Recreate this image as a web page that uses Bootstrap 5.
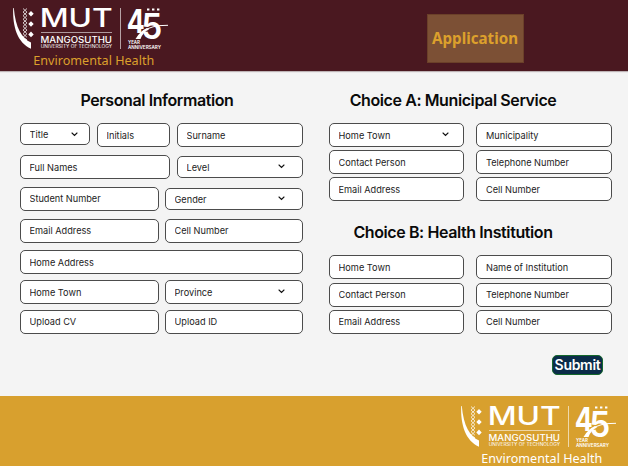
<!DOCTYPE html>
<html lang="en">
<head>
<meta charset="utf-8">
<meta name="viewport" content="width=device-width, initial-scale=1">
<title>Application</title>
<link href="https://cdn.jsdelivr.net/npm/bootstrap@5.3.0/dist/css/bootstrap.min.css" rel="stylesheet">
<style>
body{background:#f4f4f4;font-family:Inter,sans-serif;height:466px;overflow:hidden}
.top-bar{height:71px;background:#4a1820;color:#dca02c;box-shadow:0 1px 1px #bdb3b5}
.bottom-bar{height:70px;background:#d8a02e;color:#fff}
.brand-logo{width:172px;height:71px;flex:none}
.bottom-bar .brand-logo{margin-left:448px;margin-top:1.500px}
.app-btn,.app-btn:hover{width:97px;height:49px;margin:14px 0 0 255px;padding:0;border:1px solid #6b4029;border-radius:0;background:#7c5035;color:#dca02c}
.app-btn svg{display:block;width:95px;height:47px}
.form-area{height:325px;padding-left:20px}
.left-col{width:283px;margin-right:26px}
.right-col{width:283px}
h2{font-size:16px;font-weight:600;letter-spacing:-.4px;line-height:20px;color:#0a0a0a;white-space:nowrap;margin:19px 0 13px;text-align:center}
.field.form-control,.field.form-select{height:24px;min-height:0;padding:0 8.500px;border:1px solid #4c4c4c;border-radius:5px;background-color:#fff;color:#1c1c1c;font-size:9.200px;line-height:22px;min-width:0;flex:1 1 0}
.field::placeholder{color:#1c1c1c;opacity:1}
.field.form-select{background-image:none;padding-top:1px;line-height:21px}
.pick{position:relative;flex:1 1 0;display:flex}
.pick svg{position:absolute;right:18px;top:50%;width:7px;height:5px;margin-top:-3px;pointer-events:none}
.pick svg.near{right:15px}
.pick.short .field{height:22px;line-height:19px}
.pick.w-title{flex:0 0 70px}.pick.w-title svg{right:12.500px}
.field.w-init{flex:0 0 73px}
.field.w-names{flex:0 0 150px}
.field.w-half{flex:0 0 139px}
.left-title{padding-right:9px}
.r1,.r2{gap:7px}.r3,.r4,.r6,.r7{gap:6px}
.r2{margin-top:8px}.r3{margin-top:7.500px}.r4{margin-top:8px}.r5{margin-top:7.500px}.r6{margin-top:6px}.r7{margin-top:5.500px}
.choice-grid{display:grid;grid-template-columns:135px 136px;column-gap:12px;row-gap:3.200px}
.choice-grid .field:nth-child(even){padding-left:9px}
.title-a{padding-right:35px}.title-b{margin-top:21px;padding-right:35px}
.submit-btn,.submit-btn:hover{width:51px;height:20px;padding:0;border:1px solid #14682b;border-radius:5px;background:#0b2c49;color:#fff;font-size:14px;font-weight:600;letter-spacing:-.3px;line-height:18px;margin:21.500px 0 0 223px}
</style>
</head>
<body class="d-flex flex-column">
<svg class="d-none">
  <symbol id="brand" viewBox="0 0 172 71">
    <g fill="#fff" font-family="Inter,sans-serif">
      <path d="M13.200 8C12.500 27 17.500 42.500 31 48.800V42.500C22 38.500 15.500 28 13.800 8Z"/>
      <path d="M31 11l2.700 2.800-2.700 2.800-2.700-2.800zM31 21.200l2.700 2.800-2.700 2.800-2.700-2.800zM31 31.600l2.700 2.800-2.700 2.800-2.700-2.800z"/>
      <path d="M23 8.500l4 3.600-4 3.600 4 3.600-4 3.600 4 3.600-4 3.600 4 3.600-4 3.600 4 2.500M27 8.500l-4 3.600 4 3.600-4 3.600 4 3.600-4 3.600 4 3.600-4 3.600 4 3.600" fill="none" stroke="#fff" stroke-width=".9" opacity=".85"/>
      <text x="39.700" y="27" font-size="25.300" font-weight="500" textLength="73" lengthAdjust="spacingAndGlyphs">MUT</text>
      <path d="M41 32.200h71v.8H41zM120.200 8h.8v41h-.8z" opacity=".75"/>
      <text x="40.500" y="43.200" font-size="8.300" font-weight="500" textLength="71.500" lengthAdjust="spacingAndGlyphs">MANGOSUTHU</text>
      <text x="40.700" y="48.300" font-size="4.300" font-weight="400" textLength="71.300" lengthAdjust="spacingAndGlyphs">UNIVERSITY OF TECHNOLOGY</text>
      <text x="126.800" y="33" font-size="32.500" font-weight="700" textLength="18" lengthAdjust="spacingAndGlyphs">4</text>
      <text x="141.300" y="38.800" font-size="35" font-weight="600" textLength="21" lengthAdjust="spacingAndGlyphs">5</text>
      <path d="M135.500 39Q140 31 147 28L149 29.500Q143 32 140.500 39Z"/>
      <path d="M142 32Q151 25 168 25.300" fill="none" stroke="#fff" stroke-width="1"/>
      <path d="M147 9.400h2.400M152 9.400h2.400M157 9.400h2.400" stroke="#fff" stroke-width="2"/>
      <text x="128" y="43.800" font-size="4.500" font-weight="600" textLength="12" lengthAdjust="spacingAndGlyphs">YEAR</text>
      <text x="128" y="48.500" font-size="4.500" font-weight="600" textLength="33" lengthAdjust="spacingAndGlyphs">ANNIVERSARY</text>
    </g>
    <text x="33.300" y="64.500" font-family="Noto Sans,sans-serif" font-size="12.700" fill="currentColor" textLength="121" lengthAdjust="spacingAndGlyphs">Enviromental Health</text>
  </symbol>
  <symbol id="chev" viewBox="0 0 7 5"><path d="M1 1l2.500 2.500L6 1" fill="none" stroke="#111" stroke-width="1.100" stroke-linecap="round"/></symbol>
</svg>

<header class="top-bar d-flex flex-shrink-0">
  <svg class="brand-logo"><use href="#brand"/></svg>
  <button class="app-btn btn" type="button"><svg><text x="4" y="28.500" fill="currentColor" font-family="Noto Sans,sans-serif" font-size="16" font-weight="700" textLength="86" lengthAdjust="spacingAndGlyphs">Application</text></svg></button>
</header>

<main class="form-area d-flex flex-shrink-0">
  <form class="left-col">
    <h2 class="left-title">Personal Information</h2>
    <div class="d-flex r1">
      <div class="pick short w-title"><select class="form-select field"><option>Title</option></select><svg><use href="#chev"/></svg></div>
      <input class="form-control field w-init" placeholder="Initials">
      <input class="form-control field" placeholder="Surname">
    </div>
    <div class="d-flex align-items-center r2">
      <input class="form-control field w-names" placeholder="Full Names">
      <div class="pick short"><select class="form-select field"><option>Level</option></select><svg><use href="#chev"/></svg></div>
    </div>
    <div class="d-flex align-items-center r3">
      <input class="form-control field w-half" placeholder="Student Number">
      <div class="pick short"><select class="form-select field"><option>Gender</option></select><svg><use href="#chev"/></svg></div>
    </div>
    <div class="d-flex r4">
      <input class="form-control field w-half" placeholder="Email Address">
      <input class="form-control field" placeholder="Cell Number">
    </div>
    <div class="d-flex r5"><input class="form-control field" placeholder="Home Address"></div>
    <div class="d-flex r6">
      <input class="form-control field w-half" placeholder="Home Town">
      <div class="pick"><select class="form-select field"><option>Province</option></select><svg><use href="#chev"/></svg></div>
    </div>
    <div class="d-flex r7">
      <input class="form-control field w-half" placeholder="Upload CV">
      <input class="form-control field" placeholder="Upload ID">
    </div>
  </form>
  <form class="right-col">
    <h2 class="title-a">Choice A: Municipal Service</h2>
    <div class="choice-grid">
      <div class="pick"><select class="form-select field"><option>Home Town</option></select><svg class="near"><use href="#chev"/></svg></div>
      <input class="form-control field" placeholder="Municipality">
      <input class="form-control field" placeholder="Contact Person">
      <input class="form-control field" placeholder="Telephone Number">
      <input class="form-control field" placeholder="Email Address">
      <input class="form-control field" placeholder="Cell Number">
    </div>
    <h2 class="title-b">Choice B: Health Institution</h2>
    <div class="choice-grid">
      <input class="form-control field" placeholder="Home Town">
      <input class="form-control field" placeholder="Name of Institution">
      <input class="form-control field" placeholder="Contact Person">
      <input class="form-control field" placeholder="Telephone Number">
      <input class="form-control field" placeholder="Email Address">
      <input class="form-control field" placeholder="Cell Number">
    </div>
    <button class="submit-btn btn" type="button">Submit</button>
  </form>
</main>

<footer class="bottom-bar flex-shrink-0">
  <svg class="brand-logo"><use href="#brand"/></svg>
</footer>
<script src="https://cdn.jsdelivr.net/npm/bootstrap@5.3.0/dist/js/bootstrap.bundle.min.js"></script>
</body>
</html>
